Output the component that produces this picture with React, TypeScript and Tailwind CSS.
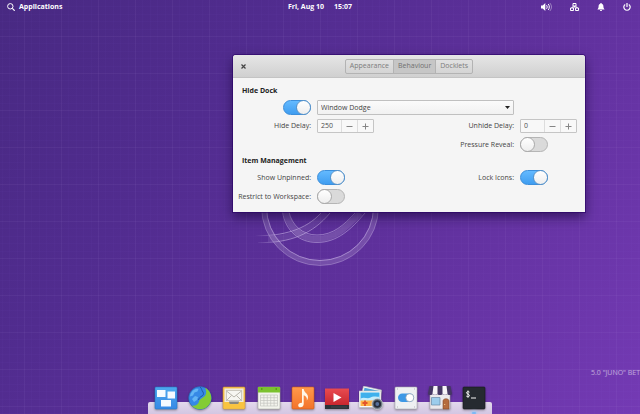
import { useState } from "react";
import type { ReactNode } from "react";

const tabs = ["Appearance", "Behaviour", "Docklets"];
const hideModes = ["Window Dodge", "Intelligent", "Auto Hide", "Dodge Active"];

const dockApps: { name: string; art: ReactNode }[] = [
  {
    name: "Multitasking View",
    art: (
      <>
        <rect x="1" y="1" width="22" height="22" rx="1" fill="url(#blue)" stroke="#2779c4" strokeWidth=".6" />
        <path d="M3 4h8.500v7H3zM13.500 5.500H21v7h-7.500zM7 14h10v6.500H7z" fill="#f5faff" />
      </>
    ),
  },
  {
    name: "Web",
    art: (
      <>
        <circle cx="12" cy="12" r="11.400" fill="#3689e6" stroke="#2864a8" strokeWidth=".6" />
        <path d="M5 4.500c2-1.500 4-2 5.500-1.500l-1 2.500-3 1-1.500 3-3 1C2 8 3.500 6 5 4.500zM7 10l3 1-1 3-3 2-2-3z" fill="#63b4f4" />
        <path
          d="M17 1.700c4 2 6.400 6 6.300 10.600C23.200 18.500 18 23.300 12 23.300c-3.400 0-6.400-1.400-8.500-3.800 3.500.8 7-.8 7.500-4 .4-3 5-3.500 6.500-6.500 1.200-2.500.7-5-.5-7.300z"
          fill="#83cc35"
        />
        <path d="M12 1c2 1.500 1.500 3.500 3 5 1 2 .5 3-1 4-2 1-3 2-3.500 4" fill="none" stroke="#1f5ba5" strokeWidth="1" />
      </>
    ),
  },
  {
    name: "Mail",
    art: (
      <>
        <rect x="1" y="1" width="22" height="22" rx="1" fill="#f8c550" stroke="#cc9634" strokeWidth=".6" />
        <path d="M2.500 2.500h19V16h-19z" fill="#eeeae1" />
        <path d="M4.500 4.500h15v10h-15z" fill="#f6f6f2" stroke="#bbb7ac" strokeWidth=".7" />
        <path d="m4.500 5 7.500 6 7.500-6M4.500 14.500l5-5M19.500 14.500l-5-5" fill="none" stroke="#aaa69c" strokeWidth=".8" />
        <path d="M7 15.500h10V18H7z" fill="#88877f" />
        <path d="M2 16h5l1 2.500h8l1-2.500h5v6.500H2z" fill="#f9c440" />
      </>
    ),
  },
  {
    name: "Calendar",
    art: (
      <>
        <rect x="1" y="1" width="22" height="22" rx="1" fill="#f3f4ed" stroke="#a9aba2" strokeWidth=".6" />
        <path d="M1 1h22v5.500H1z" fill="#7bc22f" />
        <path d="M4 3h1.500M18.500 3H20" stroke="#4e9a06" strokeWidth="1.500" />
        <path
          d="M3.500 9h17v11h-17zM3.500 11.700h17M3.500 14.500h17M3.500 17.200h17M6.900 9v11M10.300 9v11M13.700 9v11M17.100 9v11"
          fill="none"
          stroke="#c3c4bf"
          strokeWidth=".7"
        />
      </>
    ),
  },
  {
    name: "Music",
    art: (
      <>
        <rect x="1" y="1" width="22" height="22" rx="1" fill="url(#orange)" stroke="#cc5d1c" strokeWidth=".6" />
        <path
          d="M11 3h1.700c.3 3.500 4.300 4.500 4.300 8 0 1.300-.5 2.600-1.200 3.500.6-2.500-.8-4.500-3.100-5.200V18c0 2-1.500 3.300-3.300 3.300-1.400 0-2.200-.8-2.200-1.900 0-1.600 1.800-2.900 3.800-2.600z"
          fill="#fff7e8"
        />
      </>
    ),
  },
  {
    name: "Videos",
    art: (
      <>
        <path d="M0 2.500h24v17H0z" fill="url(#red)" />
        <path d="M0 19h24v4H0z" fill="#2b3238" />
        <path d="M6 21h16" stroke="#465059" strokeWidth=".7" />
        <path d="m8.500 7 8 4.500-8 4.500z" fill="#fff" />
      </>
    ),
  },
  {
    name: "Photos",
    art: (
      <>
        <path d="m4.500 0 18 4-2 14L1 14z" fill="#f4f4f4" stroke="#a9b1b8" strokeWidth=".6" />
        <path d="m5.500 1.700 15 3.300-1 4L4.500 7z" fill="#4aa4dc" />
        <path d="M0 5h22v16.500H0z" fill="#fafafa" stroke="#b9b9b9" strokeWidth=".6" />
        <path d="M1.500 6.500h19v8h-19z" fill="#3fb0ec" />
        <path d="M1.500 12.500c4-2 7 1 10-1s6 0 9-1V15h-19z" fill="#c7ecfa" />
        <path d="M1.500 14.500h19V20h-19z" fill="#ffb347" />
        <path d="M6 14.500V20M3.500 17h5" stroke="#e2542b" strokeWidth="1.800" />
        <circle cx="18.300" cy="18" r="5.500" fill="#717c86" stroke="#d8dce0" strokeWidth=".6" />
        <circle cx="18.300" cy="18" r="3.800" fill="#252d3a" />
        <circle cx="18.300" cy="18" r="1.900" fill="#56709a" />
      </>
    ),
  },
  {
    name: "System Settings",
    art: (
      <>
        <rect x="1" y="1" width="22" height="22" rx="1" fill="#eef0f2" stroke="#a8aab0" strokeWidth=".6" />
        <rect x="4" y="7.500" width="16" height="8.500" rx="4.200" fill="#3d98e5" />
        <circle cx="15.800" cy="11.700" r="4" fill="#fff" stroke="#8b9bab" strokeWidth=".7" />
        <path d="M3 3h1M20 3h1M3 21h1M20 21h1" stroke="#b5b8bd" />
      </>
    ),
  },
  {
    name: "AppCenter",
    art: (
      <>
        <path d="M2 8h20v15H2z" fill="#ebe9ec" stroke="#a8a4ad" strokeWidth=".6" />
        <path d="M1.500 0h21L24 7.500c0 2-4.500 2-4.500 0 0 2-5 2-5 0 0 2-5 2-5 0 0 2-5 2-5 0C4.500 9.500 0 9.500 0 7.500z" fill="#453764" />
        <path d="M5.500 0h4v7.500c0 1.700-5 1.700-5 0zM14.500 0h4l1 7.500c0 1.700-5 1.700-5 0z" fill="#f7f5f8" />
        <path d="M3.500 11.500H12V19H3.500z" fill="#9ccdec" stroke="#688aa7" strokeWidth=".7" />
        <path d="M15 23v-8c0-3 6-3 6 0v8z" fill="#b56c3e" stroke="#84492a" strokeWidth=".6" />
        <circle cx="16.700" cy="18.500" r=".6" fill="#ffe09c" />
      </>
    ),
  },
  {
    name: "Terminal",
    art: (
      <>
        <rect x="1" y="1" width="22" height="22" rx="1" fill="#252a30" stroke="#15181b" strokeWidth=".6" />
        <path d="M7.500 6.200C6.500 5.300 4.500 5.500 4.500 6.800c0 1.500 3 1.100 3 2.700 0 1.300-2.200 1.600-3.200.6M6 4.500v7.200M9 12h5" fill="none" stroke="#f5f5f5" strokeWidth="1" />
      </>
    ),
  },
];

function Wallpaper() {
  return (
    <div className="absolute inset-0 bg-[linear-gradient(128deg,#482982_0%,#512c8f_30%,#5e309b_58%,#743ab4_100%)]">
      <svg className="absolute inset-0 w-full h-full" aria-hidden="true">
        <defs>
          <pattern id="grid" width="37" height="37" x="24" y="36" patternUnits="userSpaceOnUse">
            <path d="M7.500 0v37M15.500 0v37M22.500 0v37M30.500 0v37M0 7.500h37M0 15.500h37M0 22.500h37M0 30.500h37" stroke="#a58be0" strokeOpacity=".025" />
            <path d="M.5 0v37M0 .5h37" stroke="#b49be8" strokeOpacity=".07" />
          </pattern>
        </defs>
        <rect width="100%" height="100%" fill="url(#grid)" />
      </svg>
      <svg className="absolute inset-0 m-auto w-[132px] h-[120px]" viewBox="254 147 132 120" fill="none" aria-hidden="true">
        <defs>
          <linearGradient id="fade" gradientUnits="userSpaceOnUse" x1="255" x2="280" y1="0" y2="0">
            <stop stopColor="#c9b5e6" stopOpacity="0" />
            <stop offset="1" stopColor="#c9b5e6" stopOpacity=".65" />
          </linearGradient>
        </defs>
        <circle cx="320" cy="207" r="56" stroke="#fff" strokeOpacity=".15" strokeWidth="5" />
        <circle cx="320" cy="207" r="58.500" stroke="#d5c3ee" strokeOpacity=".4" strokeWidth=".8" />
        <circle cx="320" cy="207" r="53.500" stroke="#d5c3ee" strokeOpacity=".75" strokeWidth=".8" />
        <path d="M286 212c3 16 15 27 31 27 18 0 30-12 43-26" stroke="#fff" strokeOpacity=".15" strokeWidth="6" />
        <path d="M282.500 212c3 19 17 30.500 34.500 30.500 20 0 34-13 48-29.500M289 212c3 13 13 23 28 23 16 0 27-10 38-22" stroke="#d5c3ee" strokeOpacity=".6" strokeWidth=".8" />
        <path d="M268 239c24 0 42-10 58-26" stroke="#fff" strokeOpacity=".08" strokeWidth="6" />
        <path d="M255 235.500c28 1 51-6 66-22.500M258 242.500c32 1 55-9 72-29.500" stroke="url(#fade)" strokeWidth=".9" />
      </svg>
      <p className="absolute bottom-9 right-0 font-['Open_Sans'] text-[7px] leading-[10px] text-white/55 whitespace-nowrap">
        5.0 &quot;JUNO&quot; BET
      </p>
    </div>
  );
}

function Panel() {
  return (
    <header className="relative grid grid-cols-[1fr_auto_1fr] items-center h-3.5 px-[7px] text-[7px] font-bold text-white">
      <button className="flex items-center gap-1 justify-self-start">
        <svg className="w-2 h-2" viewBox="0 0 8 8" fill="none" stroke="currentColor" aria-hidden="true">
          <circle cx="3.300" cy="3.300" r="2.700" />
          <path d="m5.300 5.300 2.400 2.400" strokeWidth="1.200" />
        </svg>
        Applications
      </button>
      <button className="flex gap-2.5">
        <span>Fri, Aug 10</span>
        <span>15:07</span>
      </button>
      <div className="flex items-center gap-[18px] justify-self-end pr-0.5">
        <button aria-label="Sound">
          <svg className="block w-[11px] h-2" viewBox="0 0 11 8" fill="none" stroke="currentColor">
            <path d="M0 2.500h1.700L4.300 0v8L1.700 5.500H0z" fill="currentColor" stroke="none" />
            <path d="M5.500 2.200c.9 1 .9 2.600 0 3.600M7.200 1c1.500 1.800 1.500 4.200 0 6" />
            <path d="M8.800 0c2.200 2.500 2.200 5.500 0 8" strokeOpacity=".5" strokeWidth=".8" />
          </svg>
        </button>
        <button aria-label="Network">
          <svg className="block w-[9px] h-2" viewBox="0 0 9 8" fill="none" stroke="currentColor">
            <path d="M3 .5h3V3H3zM.5 5h3v2.500h-3zM5.500 5h3v2.500h-3zM4.500 3v1M2 5V4h5v1" />
          </svg>
        </button>
        <button aria-label="Notifications">
          <svg className="block w-2 h-2" viewBox="0 0 8 8" fill="currentColor">
            <path d="M4 0c.5 0 .8.300.8.700C6 1.100 6.400 2 6.400 3.200c0 1.600.4 2.300 1.200 3.200H.4c.8-.9 1.200-1.600 1.200-3.200C1.600 2 2 1.100 3.200.7c0-.4.3-.7.8-.7zM3 6.900h2C5 7.600 4.600 8 4 8s-1-.4-1-1.100z" />
          </svg>
        </button>
        <button aria-label="Session">
          <svg className="block w-2 h-2" viewBox="0 0 8 8" fill="none" stroke="currentColor" strokeWidth="1.200">
            <path d="M2.200 1.400a3.200 3.200 0 1 0 3.600 0M4 0v4" />
          </svg>
        </button>
      </div>
    </header>
  );
}

function Switch({ id, label, defaultChecked }: { id: string; label?: string; defaultChecked?: boolean }) {
  return (
    <input
      id={id}
      type="checkbox"
      role="switch"
      aria-label={label}
      defaultChecked={defaultChecked}
      className="appearance-none flex w-7 h-[15px] rounded-full border border-[#b5b5b5] bg-[#dadada] checked:justify-end checked:border-[#3c8fdc] checked:bg-[linear-gradient(#64baff,#3f9df0)] before:content-[''] before:-m-px before:w-[15px] before:h-[15px] before:rounded-full before:border before:border-[#aaa] checked:before:border-[#5a93c8] before:bg-[linear-gradient(#fff,#eee)]"
    />
  );
}

function SpinButton({ id, initial, step }: { id: string; initial: number; step: number }) {
  const [value, setValue] = useState(initial);
  return (
    <div className="flex h-3.5 w-[57px] rounded-[1px] border border-[#c5c5c5] bg-[#f8f8f8]">
      <input
        id={id}
        inputMode="numeric"
        value={value}
        onChange={(e) => setValue(Number(e.target.value) || 0)}
        className="min-w-0 flex-1 pl-[3px] text-[#4d4d4d] outline-none"
      />
      <button
        aria-label="Decrease"
        onClick={() => setValue(Math.max(0, value - step))}
        className="flex w-4 items-center justify-center border-l border-[#ddd] text-[#858585]"
      >
        <svg className="w-[7px] h-[7px]" viewBox="0 0 7 7" stroke="currentColor" aria-hidden="true">
          <path d="M.5 3.500h6" />
        </svg>
      </button>
      <button
        aria-label="Increase"
        onClick={() => setValue(value + step)}
        className="flex w-4 items-center justify-center border-l border-[#ddd] text-[#858585]"
      >
        <svg className="w-[7px] h-[7px]" viewBox="0 0 7 7" stroke="currentColor" aria-hidden="true">
          <path d="M.5 3.500h6M3.500.5v6" />
        </svg>
      </button>
    </div>
  );
}

function Label({ htmlFor, children }: { htmlFor: string; children: ReactNode }) {
  return (
    <label htmlFor={htmlFor} className="justify-self-end whitespace-nowrap">
      {children}
    </label>
  );
}

function PreferencesWindow() {
  const [active, setActive] = useState("Behaviour");

  return (
    <section className="absolute left-[233px] top-[55px] w-[352px] overflow-hidden rounded-t-[3px] bg-[#f5f5f5] text-[7px] leading-[10px] text-[#444] shadow-[0_0_0_1px_rgba(45,5,105,0.65),0_5px_12px_rgba(20,0,50,0.6)]">
      <div className="grid grid-cols-[1fr_auto_1fr] items-center h-[23px] px-2 border-b border-[#c4c4c4] bg-[linear-gradient(#e6e6e6,#d0d0d0)]">
        <button aria-label="Close" className="justify-self-start">
          <svg className="block w-[5px] h-[5px]" viewBox="0 0 5 5" stroke="#444" strokeWidth="1.200">
            <path d="m.5.5 4 4m0-4-4 4" />
          </svg>
        </button>
        <div role="tablist" className="flex h-[15px] rounded-[2px] border border-[#b3b3b3] divide-x divide-[#b3b3b3] text-[#7c7c7c]">
          {tabs.map((tab) => (
            <button
              key={tab}
              role="tab"
              aria-selected={tab === active}
              onClick={() => setActive(tab)}
              className="px-1 aria-selected:bg-[#c6c6c6] aria-selected:text-[#707070]"
            >
              {tab}
            </button>
          ))}
        </div>
      </div>

      <div className="grid grid-cols-[69px_57px_1fr_57px] gap-x-1.5 gap-y-1 items-center pl-[9px] pr-2 pt-2 pb-2">
        <h2 className="col-span-4 font-bold text-[#222]">Hide Dock</h2>

        <div className="justify-self-end">
          <Switch id="hide-dock" label="Hide Dock" defaultChecked />
        </div>
        <div className="col-span-2 grid items-center">
          <select
            aria-label="Hide mode"
            className="col-start-1 row-start-1 w-full h-[15px] appearance-none rounded-[1px] border border-[#c0c0c0] bg-[linear-gradient(#fbfbfb,#f1f1f1)] pl-[3px]"
          >
            {hideModes.map((mode) => (
              <option key={mode}>{mode}</option>
            ))}
          </select>
          <svg className="col-start-1 row-start-1 mr-1 w-[5px] h-[3px] justify-self-end pointer-events-none" viewBox="0 0 5 3" aria-hidden="true">
            <path d="M0 0h5L2.500 3z" fill="#222" />
          </svg>
        </div>

        <div className="col-start-1 justify-self-end">
          <Label htmlFor="hide-delay">Hide Delay:</Label>
        </div>
        <SpinButton id="hide-delay" initial={250} step={10} />
        <Label htmlFor="unhide-delay">Unhide Delay:</Label>
        <SpinButton id="unhide-delay" initial={0} step={10} />

        <div className="col-start-3 justify-self-end">
          <Label htmlFor="pressure">Pressure Reveal:</Label>
        </div>
        <Switch id="pressure" />

        <h2 className="col-span-4 font-bold text-[#222]">Item Management</h2>

        <Label htmlFor="unpinned">Show Unpinned:</Label>
        <Switch id="unpinned" defaultChecked />
        <Label htmlFor="lock">Lock Icons:</Label>
        <Switch id="lock" defaultChecked />

        <Label htmlFor="restrict">Restrict to Workspace:</Label>
        <Switch id="restrict" />
      </div>
    </section>
  );
}

function Dock() {
  return (
    <nav
      aria-label="Dock"
      className="relative mt-auto mx-auto flex w-[344px] h-3 items-end justify-between rounded-t-[2px] bg-[linear-gradient(#e3d9ec,#d3c6e2)] px-1.5 pb-1"
    >
      <svg className="absolute w-0 h-0" aria-hidden="true">
        <defs>
          <linearGradient id="blue" x2="0" y2="1">
            <stop stopColor="#4ea9ee" />
            <stop offset="1" stopColor="#3689e6" />
          </linearGradient>
          <linearGradient id="orange" x2="0" y2="1">
            <stop stopColor="#ff9a4c" />
            <stop offset="1" stopColor="#f37329" />
          </linearGradient>
          <linearGradient id="red" x2="0" y2="1">
            <stop stopColor="#e94b50" />
            <stop offset="1" stopColor="#c6262e" />
          </linearGradient>
        </defs>
      </svg>
      {dockApps.map((app) => (
        <button key={app.name} aria-label={app.name}>
          <svg className="block w-6 h-6 drop-shadow-[0_1px_1px_rgba(0,0,0,0.35)]" viewBox="0 0 24 24">
            {app.art}
          </svg>
        </button>
      ))}
      {/* running indicator under the terminal */}
      <span className="absolute bottom-0 right-4 w-1 h-0.5 rounded-full bg-[#7db8f5] shadow-[0_0_3px_1px_#9cc8f5]" />
    </nav>
  );
}

export default function App() {
  return (
    <main className="relative flex flex-col min-h-screen overflow-hidden font-['Open_Sans',sans-serif]">
      <Wallpaper />
      <Panel />
      <PreferencesWindow />
      <Dock />
    </main>
  );
}
